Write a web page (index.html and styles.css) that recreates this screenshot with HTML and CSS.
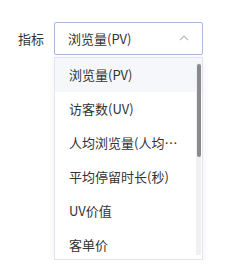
FILE: index.html
```html
<!DOCTYPE html>
<html lang="zh">
  <head>
    <meta charset="UTF-8" />
    <meta name="viewport" content="width=device-width, initial-scale=1.0" />
    <title>指标选择</title>
    <link rel="stylesheet" href="styles.css">
  </head>
  <body>
    <div class="field">
      <label class="field__label">指标</label>
      <div class="select">
        <div class="select__input">
          <span class="select__value">浏览量(PV)</span>
          <svg class="select__arrow" width="10" height="6" viewBox="0 0 10 6">
            <path d="M1 5 L5 1 L9 5" fill="none" stroke="#b8bcc4" stroke-width="1.2" />
          </svg>
        </div>

        <div class="dropdown">
          <ul class="dropdown__list">
            <li class="dropdown__item hover">浏览量(PV)</li>
            <li class="dropdown__item">访客数(UV)</li>
            <li class="dropdown__item">人均浏览量(人均浏览量)</li>
            <li class="dropdown__item">平均停留时长(秒)</li>
            <li class="dropdown__item">UV价值</li>
            <li class="dropdown__item">客单价</li>
          </ul>
          <div class="dropdown__track">
            <div class="dropdown__thumb"></div>
          </div>
        </div>
      </div>
    </div>
  </body>
</html>
```

FILE: styles.css
```css
* {
  margin: 0;
  padding: 0;
  box-sizing: border-box;
}

body {
  background: #fff;
  color: #333;
  font-family: "Noto Sans CJK SC", "Liberation Sans", sans-serif;
  font-size: 13px;
}

.field {
  display: flex;
  align-items: flex-start;
  padding: 22px 0 0 18px;
}

.field__label {
  width: 36px;
  height: 33px;
  line-height: 33px;
  color: #333;
}

.select {
  display: flex;
  flex-direction: column;
  gap: 2px;
  width: 149px;
}

.select__input {
  display: flex;
  align-items: center;
  justify-content: space-between;
  height: 33px;
  padding: 0 13px 0 13px;
  border: 1px solid #a4bcd8;
  border-radius: 2px;
  background: #fff;
}

.select__arrow {
  margin-top: -2px;
}

.dropdown {
  position: relative;
  width: 149px;
  height: 203px;
  border: 1px solid #e1e4ea;
  background: #fff;
  box-shadow: 0 2px 8px rgba(0, 0, 0, 0.06);
  overflow: hidden;
}

.dropdown__list {
  list-style: none;
}

.dropdown__item {
  height: 34px;
  line-height: 34px;
  padding: 0 22px 0 14px;
  white-space: nowrap;
  overflow: hidden;
  text-overflow: ellipsis;
}

.dropdown__item.hover {
  background: #f5f7fa;
}

.dropdown__track {
  position: absolute;
  top: 5px;
  right: 1px;
  bottom: 4px;
  width: 5px;
  background: #f0f0f0;
}

.dropdown__thumb {
  margin: 1px auto 0;
  width: 4px;
  height: 93px;
  border-radius: 2px;
  background: #8a8a8a;
}
```
